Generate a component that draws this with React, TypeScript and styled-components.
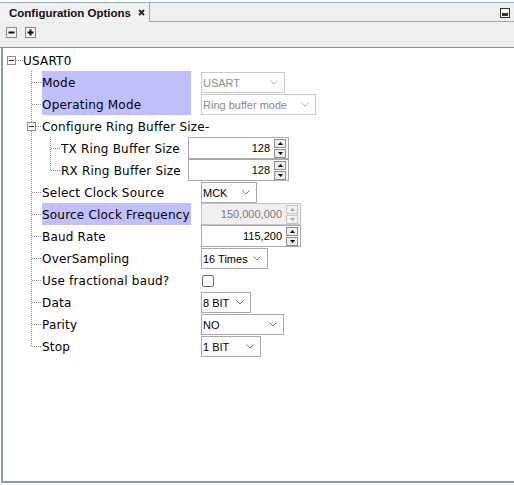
import React from 'react';
import styled, { createGlobalStyle } from 'styled-components';

const GlobalStyle = createGlobalStyle`
  html, body { margin: 0; padding: 0; background: #ffffff; }
  body { font-family: "DejaVu Sans", sans-serif; }
`;

const Panel = styled.div`
  width: 514px;
  height: 485px;
  display: flex;
  flex-direction: column;
  box-sizing: border-box;
`;

const TabBar = styled.div`
  margin-top: 2px;
  height: 20px;
  display: flex;
  background: #efefef;
  border-top: 1px solid #93a8b9;
  box-sizing: border-box;
`;

const Tab = styled.div`
  width: 150px;
  display: flex;
  align-items: center;
  padding-left: 9px;
  box-sizing: border-box;
  background: #f2f2f3;
  border-right: 1px solid #9aa7b4;
  font-family: "Liberation Sans", Arial, sans-serif;
  font-weight: bold;
  font-size: 11.5px;
  color: #111;
  gap: 7px;
`;

const TabFiller = styled.div`
  flex: 1;
  display: flex;
  justify-content: flex-end;
  align-items: center;
  padding-right: 4px;
  border-bottom: 1px solid #93a8b9;
`;

const Toolbar = styled.div`
  height: 26px;
  box-sizing: border-box;
  background: #efefef;
  border-bottom: 1px solid #8c8c98;
  display: flex;
  align-items: flex-start;
  padding: 5px 0 0 6px;
  gap: 8px;
`;

const ToolButton = styled.div`
  width: 11px;
  height: 11px;
  display: flex;
`;

const Content = styled.div`
  flex: 1;
  margin-left: 1px;
  margin-bottom: 2px;
  background: #fff;
  border-left: 2px solid #8d9aab;
  border-bottom: 2px solid #8d9aab;
  padding-top: 1px;
  display: flex;
  flex-direction: column;
`;

const Row = styled.div`
  height: 22px;
  display: flex;
  align-items: flex-start;
  flex-shrink: 0;
`;

const Gutter = styled.svg`
  flex-shrink: 0;
  display: block;
`;

const Label = styled.div<{ $w?: number; $hl?: boolean }>`
  ${(p) => (p.$w ? `width: ${p.$w}px;` : '')}
  flex-shrink: 0;
  height: 22px;
  box-sizing: border-box;
  padding-top: 1px;
  line-height: 22px;
  font-family: "DejaVu Sans", sans-serif;
  font-size: 12px;
  letter-spacing: 0.2px;
  color: #000;
  white-space: nowrap;
  background: ${(p) => (p.$hl ? '#c0c0fe' : 'transparent')};
`;

const ControlCell = styled.div<{ $ml: number }>`
  margin-left: ${(p) => p.$ml}px;
  display: flex;
  height: 22px;
  align-items: flex-start;
`;

const ComboBox = styled.div<{ $w: number; $disabled?: boolean }>`
  width: ${(p) => p.$w}px;
  height: 21px;
  margin-top: 1px;
  box-sizing: border-box;
  border: 1px solid ${(p) => (p.$disabled ? '#c9c9c9' : '#a9a9a9')};
  background: #fff;
  display: flex;
  align-items: center;
  padding-left: 1px;
  font-family: "Liberation Sans", Arial, sans-serif;
  font-size: 11px;
  color: ${(p) => (p.$disabled ? '#8a8a8a' : '#000')};
`;

const ComboText = styled.span`
  flex: 1;
  white-space: nowrap;
`;

const Chevron = styled.svg`
  margin-right: 6px;
  display: block;
`;

const Spinner = styled.div<{ $w: number; $disabled?: boolean }>`
  width: ${(p) => p.$w}px;
  height: 22px;
  box-sizing: border-box;
  border: 1px solid ${(p) => (p.$disabled ? '#c4c4c4' : '#a9a9a9')};
  background: ${(p) => (p.$disabled ? '#f0f0f0' : '#fff')};
  display: flex;
  align-items: center;
  font-family: "Liberation Sans", Arial, sans-serif;
  font-size: 11px;
  color: ${(p) => (p.$disabled ? '#7a7a7a' : '#000')};
`;

const SpinnerValue = styled.span`
  flex: 1;
  text-align: right;
  padding-right: 4px;
`;

const ArrowCol = styled.div`
  display: flex;
  flex-direction: column;
  gap: 1px;
  margin-right: 2px;
`;

const ArrowButton = styled.div<{ $disabled?: boolean }>`
  width: 12px;
  height: 9px;
  box-sizing: border-box;
  border: 1px solid ${(p) => (p.$disabled ? '#c6c6c6' : '#8e8e8e')};
  background: ${(p) => (p.$disabled ? '#f2f2f2' : '#ececec')};
  display: flex;
  align-items: center;
  justify-content: center;
`;

const CheckBox = styled.div`
  width: 12px;
  height: 12px;
  margin: 6px 0 0 1px;
  box-sizing: border-box;
  border: 1px solid #6b6b6b;
  border-radius: 2px;
  background: #fff;
`;

const DOT = '#8a8a8a';

type GutterProps = {
  level: 0 | 1 | 2;
  last?: boolean;
  expander?: boolean;
};

const Expander: React.FC<{ x: number }> = ({ x }) => (
  <g>
    <rect x={x + 0.5} y={7.5} width={8} height={8} fill="#fff" stroke="#8c8c8c" />
    <line x1={x + 2} x2={x + 7} y1={11.5} y2={11.5} stroke="#222" />
  </g>
);

const TreeGutter: React.FC<GutterProps> = ({ level, last, expander }) => {
  const widths = { 0: 20, 1: 39, 2: 58 };
  const w = widths[level];
  return (
    <Gutter width={w} height={22} viewBox={`0 0 ${w} 22`}>
      {level === 0 && (
        <>
          <line x1={13} x2={20} y1={11.5} y2={11.5} stroke={DOT} strokeDasharray="1 1" />
          <Expander x={4} />
        </>
      )}
      {level === 1 && (
        <>
          <line x1={28.5} x2={28.5} y1={0} y2={last ? 12 : 22} stroke={DOT} strokeDasharray="1 1" />
          <line x1={expander ? 33 : 29} x2={39} y1={11.5} y2={11.5} stroke={DOT} strokeDasharray="1 1" />
          {expander && <Expander x={24} />}
        </>
      )}
      {level === 2 && (
        <>
          <line x1={28.5} x2={28.5} y1={0} y2={22} stroke={DOT} strokeDasharray="1 1" />
          <line x1={47.5} x2={47.5} y1={0} y2={last ? 12 : 22} stroke={DOT} strokeDasharray="1 1" />
          <line x1={48} x2={58} y1={11.5} y2={11.5} stroke={DOT} strokeDasharray="1 1" />
        </>
      )}
    </Gutter>
  );
};

const Combo: React.FC<{ value: string; w: number; disabled?: boolean }> = ({ value, w, disabled }) => (
  <ComboBox $w={w} $disabled={disabled}>
    <ComboText>{value}</ComboText>
    <Chevron width={8} height={5} viewBox="0 0 8 5">
      <polyline points="0.5,0.5 4,4 7.5,0.5" fill="none" stroke={disabled ? '#b0b0b0' : '#7a7a7a'} strokeWidth={1} />
    </Chevron>
  </ComboBox>
);

const Tri: React.FC<{ up?: boolean; disabled?: boolean }> = ({ up, disabled }) => (
  <svg width={5} height={3} viewBox="0 0 5 3" style={{ display: 'block' }}>
    <polygon points={up ? '0,3 5,3 2.5,0' : '0,0 5,0 2.5,3'} fill={disabled ? '#a5a5a5' : '#000'} />
  </svg>
);

const Spin: React.FC<{ value: string; w: number; disabled?: boolean }> = ({ value, w, disabled }) => (
  <Spinner $w={w} $disabled={disabled}>
    <SpinnerValue>{value}</SpinnerValue>
    <ArrowCol>
      <ArrowButton $disabled={disabled}>
        <Tri up disabled={disabled} />
      </ArrowButton>
      <ArrowButton $disabled={disabled}>
        <Tri disabled={disabled} />
      </ArrowButton>
    </ArrowCol>
  </Spinner>
);

type Item = {
  label: string;
  level: 0 | 1 | 2;
  last?: boolean;
  expander?: boolean;
  hl?: boolean;
  control?: React.ReactNode;
};

const items: Item[] = [
  { label: 'USART0', level: 0 },
  { label: 'Mode', level: 1, hl: true, control: <Combo value="USART" w={84} disabled /> },
  { label: 'Operating Mode', level: 1, hl: true, control: <Combo value="Ring buffer mode" w={115} disabled /> },
  { label: 'Configure Ring Buffer Size-', level: 1, expander: true },
  { label: 'TX Ring Buffer Size', level: 2, control: <Spin value="128" w={101} /> },
  { label: 'RX Ring Buffer Size', level: 2, last: true, control: <Spin value="128" w={101} /> },
  { label: 'Select Clock Source', level: 1, control: <Combo value="MCK" w={56} /> },
  { label: 'Source Clock Frequency', level: 1, hl: true, control: <Spin value="150,000,000" w={100} disabled /> },
  { label: 'Baud Rate', level: 1, control: <Spin value="115,200" w={100} /> },
  { label: 'OverSampling', level: 1, control: <Combo value="16 Times" w={67} /> },
  { label: 'Use fractional baud?', level: 1, control: <CheckBox /> },
  { label: 'Data', level: 1, control: <Combo value="8 BIT" w={50} /> },
  { label: 'Parity', level: 1, control: <Combo value="NO" w={83} /> },
  { label: 'Stop', level: 1, last: true, control: <Combo value="1 BIT" w={60} /> },
];

export default function App() {
  return (
    <>
      <GlobalStyle />
      <Panel>
        <TabBar>
          <Tab>
            <span>Configuration Options</span>
            <svg width={7} height={7} viewBox="0 0 7 7" style={{ display: 'block' }}>
              <path d="M1 1 L6 6 M6 1 L1 6" stroke="#222" strokeWidth={1.8} />
            </svg>
          </Tab>
          <TabFiller>
            <svg width={10} height={10} viewBox="0 0 10 10" style={{ display: 'block', marginTop: 2 }}>
              <rect x={0.5} y={0.5} width={9} height={9} fill="#f4f4f4" stroke="#333" />
              <rect x={2} y={5} width={6} height={3} fill="#333" />
            </svg>
          </TabFiller>
        </TabBar>
        <Toolbar>
          <ToolButton>
            <svg width={11} height={11} viewBox="0 0 11 11">
              <rect x={0.5} y={0.5} width={10} height={10} fill="#f3f3f3" stroke="#8a8a8a" />
              <rect x={2.5} y={4.5} width={6} height={2} fill="#111" />
            </svg>
          </ToolButton>
          <ToolButton>
            <svg width={11} height={11} viewBox="0 0 11 11">
              <rect x={0.5} y={0.5} width={10} height={10} fill="#f3f3f3" stroke="#8a8a8a" />
              <rect x={2.5} y={4.5} width={6} height={2} fill="#111" />
              <rect x={4.5} y={2.5} width={2} height={6} fill="#111" />
            </svg>
          </ToolButton>
        </Toolbar>
        <Content>
          {items.map((it) => {
            const labelW = it.level === 2 ? 127 : it.level === 1 ? 149 : undefined;
            const ml = it.level === 2 ? 0 : 10;
            return (
              <Row key={it.label}>
                <TreeGutter level={it.level} last={it.last} expander={it.expander} />
                <Label $w={it.control ? labelW : undefined} $hl={it.hl}>
                  {it.label}
                </Label>
                {it.control && <ControlCell $ml={ml}>{it.control}</ControlCell>}
              </Row>
            );
          })}
        </Content>
      </Panel>
    </>
  );
}
